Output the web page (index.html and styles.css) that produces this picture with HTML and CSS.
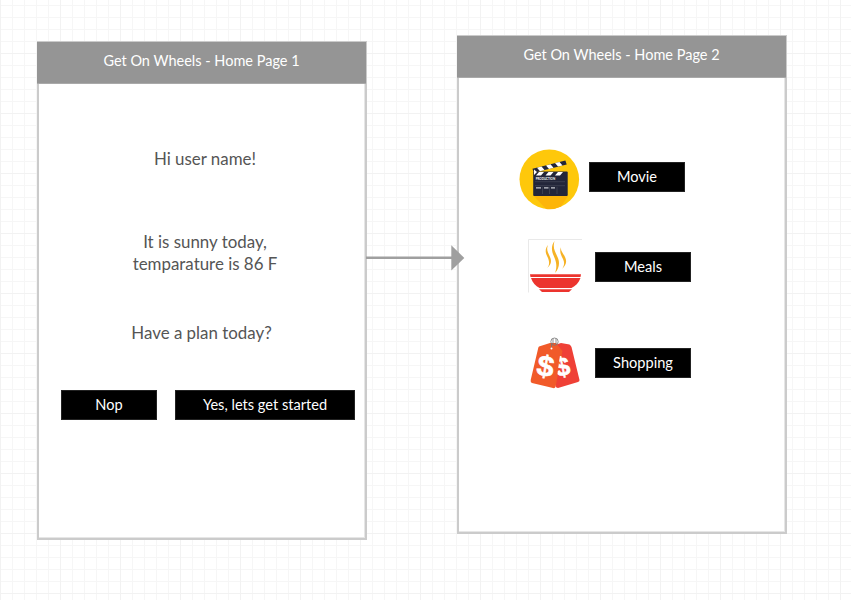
FILE: index.html
```html
<!DOCTYPE html>
<html lang="en">
<head>
<meta charset="utf-8">
<title>Get On Wheels</title>
<link rel="stylesheet" href="styles.css">
</head>
<body>
<main class="canvas">
  <section class="screen screen-one">
    <h1 class="title">Get On Wheels - Home Page 1</h1>
    <p class="text greeting">Hi user name!</p>
    <p class="text weather">It is sunny today,<br>temparature is 86 F</p>
    <p class="text question">Have a plan today?</p>
    <div class="actions">
      <button class="btn">Nop</button>
      <button class="btn wide">Yes, lets get started</button>
    </div>
  </section>

  <section class="screen screen-two">
    <h1 class="title">Get On Wheels - Home Page 2</h1>
    <div class="option movie">
      <svg class="icon" width="62" height="62" viewBox="0 0 62 62">
        <circle cx="31.3" cy="30.3" r="29.800" fill="#fec80b"/>
        <path d="M15 46L28 60Q36 61 43 57.500L50 47V45Z" fill="#fdb509"/>
        <g fill="#23263a">
          <rect x="15.200" y="22.500" width="34.500" height="24.500" rx="1"/>
          <path d="M14.500 19.800L47.400 11.500L48.700 15.500L15.800 23.800Z"/>
        </g>
        <g fill="#fff">
          <path d="M19 18.700l4.500-1.200 3 3.500-4.500 1.200zM28 16.400l4.500-1.200 3 3.500-4.500 1.200zM37 14.100l4.500-1.200 3 3.500-4.500 1.200z"/>
          <path d="M21 23h5l-3 3.500h-5zM30.500 23h5l-3 3.500h-5zM40 23h5l-3 3.500h-5z"/>
          <path d="M16 20.500l3 2.500-3 3z"/>
        </g>
        <text class="slate" x="17.700" y="31.200" textLength="19.500" lengthAdjust="spacingAndGlyphs">PRODUCTION</text>
        <path d="M17 32.700H47M17 36.700H47M24.500 38v7M31.500 38v7M39 38v7" stroke="#555867" stroke-width=".5"/>
        <path d="M18 38.800h5M26 38.800h4.500M33 38.800h4" stroke="#c8c9d0" stroke-width="1.200"/>
      </svg>
      <button class="btn">Movie</button>
    </div>
    <div class="option meals">
      <svg class="icon" width="54" height="54" viewBox="0 0 54 54">
        <path d="M.5 53.500V.5H54" fill="none" stroke="#e9e9e9"/>
        <g fill="#f6b225">
          <path d="M20 6C16 11 18 15 20 19C22 24 21 27 19 29C23 26 24 22 22 18C20 13 18 11 20 6Z"/>
          <path d="M26.500 2C21.500 9 25 15 27 20C29 26 28.500 29 27 34C31.500 29 32 23 29.500 18C27 12 24.500 9 26.500 2Z"/>
          <path d="M33 8C31 13 33.500 17 35 20C37 24 36 27 34 30C38.500 26 39 22 37 18C34.500 13 32.500 12 33 8Z"/>
        </g>
        <g fill="#ec342e">
          <path d="M2 35.200H53L52.500 38H2.500Z"/>
          <path d="M3 39H52.500C50.500 44 47.500 47 43.500 49H11.500C7.500 47 4.500 43.500 3 39Z"/>
          <path d="M11 50.200H44L41 53H14Z"/>
        </g>
      </svg>
      <button class="btn">Meals</button>
    </div>
    <div class="option shopping">
      <svg class="icon" width="50" height="52" viewBox="0 0 50 52">
        <path d="M25 8L31 6L39.500 7.500Q41 8.500 41.500 10L49.500 43Q49.700 44.500 48 45L28 51Q26 51 25.500 49Z" fill="#ef4036"/>
        <path d="M9 9.500L20 6H26L32.500 14L25.500 50Q25 51.500 23 51L2 46Q.3 45.500 .7 43L8 12Q8.200 10 9 9.500Z" fill="#f15a29"/>
        <g fill="none" stroke="#777" stroke-width=".8">
          <ellipse cx="24.500" cy="4.700" rx="3.700" ry="3.700"/>
          <path d="M23 1.500v6M26 1.500v6M21.500 6.500V11"/>
        </g>
        <circle cx="21.500" cy="11.500" r="1" fill="#fff"/>
        <text class="dollar" transform="translate(5.600 37.500) rotate(10) scale(1.050 1)">$</text>
        <clipPath id="back-tag"><path d="M31 10H50V50H25.800Z"/></clipPath>
        <g clip-path="url(#back-tag)"><text class="dollar small" transform="translate(27.300 40) rotate(-12)">$</text></g>
      </svg>
      <button class="btn">Shopping</button>
    </div>
  </section>

  <svg class="connector" width="100" height="28" viewBox="0 0 100 28">
    <path d="M0 13.800H87" stroke="#9f9f9f" stroke-width="2.500"/>
    <path d="M85.300 1.300L98.300 13.900L85.300 26.500Z" fill="#9f9f9f"/>
  </svg>
</main>
</body>
</html>
```

FILE: styles.css
```css
* { box-sizing: border-box; }

body {
  margin: 0;
  font-family: Lato, sans-serif;
}

.canvas {
  position: relative;
  width: 851px;
  height: 600px;
  overflow: hidden;
  background-color: #fff;
  background-image:
    linear-gradient(to right, #f2f2f2 1px, transparent 1px),
    linear-gradient(to bottom, #f2f2f2 1px, transparent 1px),
    linear-gradient(to right, #f6f6f6 1px, transparent 1px),
    linear-gradient(to bottom, #f6f6f6 1px, transparent 1px);
  background-size: 60px 60px, 60px 60px, 12px 12px, 12px 12px;
  background-position: 0 0, 0 53px, 0 0, 0 5px;
}

.screen {
  position: absolute;
  width: 330px;
  height: 499px;
  background: #fff;
  border: 2px solid #cbcbcb;
  box-shadow: inset 0 -1px #e6e6e6, inset -1px 0 #e6e6e6;
}

.screen-one { left: 37px; top: 41px; }
.screen-two { left: 457px; top: 35px; }

.title {
  height: 42px;
  margin: -1px -1px 0 -2px;
  background: #959595;
  border-bottom: 1px solid #a9a9a9;
  color: #fff;
  font-size: 14.5px;
  font-weight: 400;
  line-height: 38px;
  text-align: center;
}

.text {
  margin: 0;
  color: #555;
  font-size: 16.9px;
  line-height: 22px;
  text-align: center;
}

.greeting { margin-top: 64px; padding-left: 6px; }
.weather { margin-top: 61px; padding-left: 6px; }
.question { margin-top: 47px; padding-right: 1px; }

.actions {
  display: flex;
  gap: 18px;
  margin: 46px 0 0 22px;
}

.btn {
  width: 96px;
  height: 30px;
  padding: 0;
  border: 1px solid #222;
  background: #000;
  color: #fff;
  font: 14.6px/28px Lato, sans-serif;
}

.wide { width: 180px; }

.option {
  display: flex;
  align-items: flex-start;
}

.movie { margin: 71px 0 0 59px; height: 62px; }
.movie .btn { margin: 13px 0 0 9px; }
.meals { margin: 28px 0 0 69px; height: 54px; }
.meals .btn { margin: 13px 0 0 13px; }
.shopping { margin: 44px 0 0 71px; height: 52px; }
.shopping .btn { margin: 11px 0 0 15px; }

.slate {
  font: bold 4px Lato, sans-serif;
  fill: #fff;
}

.dollar {
  font: bold 29px "Liberation Sans", sans-serif;
  fill: #fff;
  stroke: #fff;
  stroke-width: .6px;
}

.small { font-size: 26px; }

.connector {
  position: absolute;
  left: 366px;
  top: 244px;
}
```
